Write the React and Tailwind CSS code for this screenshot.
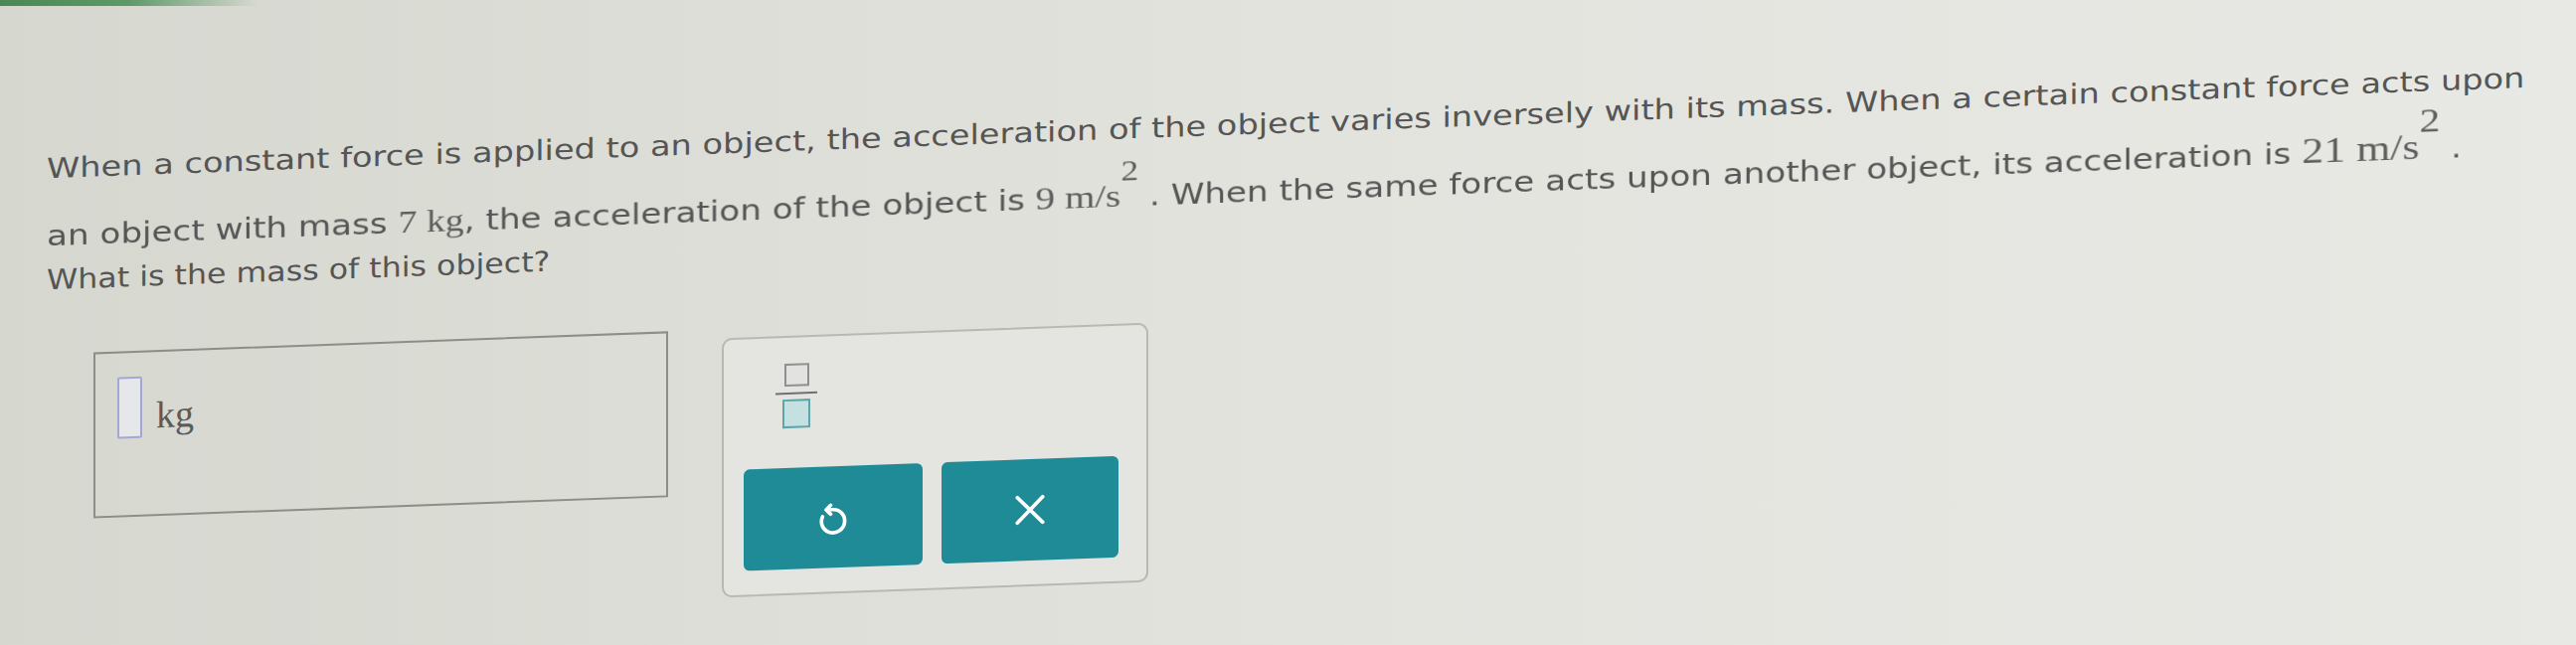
import React from 'react';

const serif = "font-['Liberation_Serif','Times_New_Roman',serif]";

function UndoIcon() {
  return (
    <svg width="40" height="40" viewBox="0 0 24 24" fill="none" stroke="white" strokeWidth="2.2" strokeLinecap="round" strokeLinejoin="round">
      <path d="M8.5 7.5 H12 A7 7 0 1 1 5.6 11.6" />
      <path d="M10.5 4.8 L7.8 7.5 L10.5 10.2" />
    </svg>
  );
}

function XIcon() {
  return (
    <svg width="34" height="34" viewBox="0 0 24 24" fill="none" stroke="white" strokeWidth="2.6" strokeLinecap="round">
      <path d="M3 3 L21 21 M21 3 L3 21" />
    </svg>
  );
}

export default function App() {
  return (
    <div className="w-[2591px] h-[649px] overflow-hidden bg-linear-to-r from-[#d6d7cf] via-[#e2e3dd] to-[#e8e9e4] font-['DejaVu_Sans',sans-serif] text-[#555555]">
      {/* top progress strip */}
      <div className="h-[6px] w-[260px] bg-linear-to-r from-[#4c8756] via-[#5e9a68] to-transparent" />

      <div className="origin-top-left skew-y-[-2.1deg] pt-[144px]">
        {/* question text */}
        <div className="pl-[47px] text-[28px]">
          <div className="origin-left scale-x-[1.2] h-[44px] leading-[44px] whitespace-nowrap">
            When a constant force is applied to an object, the acceleration of the object varies inversely with its mass. When a certain constant force acts upon
          </div>
          <div className="origin-left scale-x-[1.22] mt-[24px] h-[44px] leading-[44px] whitespace-nowrap">
            an object with mass <span className={`${serif} text-[31px] leading-none text-[#5e5e5e]`}>7 kg</span>, the acceleration of the object is{' '}
            <span className={`${serif} leading-none text-[32px] text-[#5e5e5e]`}>
              9 m/s
              <span className="relative -top-[26px] inline-block text-[29px] leading-none">2</span>
            </span>{' '}
            . When the same force acts upon another object, its acceleration is{' '}
            <span className={`${serif} leading-none text-[36px] text-[#5e5e5e]`}>
              21 m/s
              <span className="relative -top-[27px] inline-block text-[34px] leading-none">2</span>
            </span>{' '}
            .
          </div>
          <div className="origin-left scale-x-[1.13] h-[44px] leading-[44px] whitespace-nowrap">What is the mass of this object?</div>
        </div>

        {/* answer area */}
        <div className="mt-[52px] pl-[94px] flex items-start gap-[54px]">
          <div className="w-[578px] h-[167px] border-2 border-[#8e8e89] pl-[22px] pt-[24px] flex items-start">
            <div className="w-[25px] h-[62px] border-2 border-[#a4a7d4] rounded-[2px] bg-[#e6e7ea]" />
            <span className={`${serif} ml-[14px] mt-[20px] text-[38px] leading-none text-[#5a5a5a]`}>kg</span>
          </div>

          <div className="mt-[9px] w-[429px] h-[261px] border-2 border-[#b8b9b3] rounded-[10px] bg-[#e4e5e0] pl-[20px] pt-[26px]">
            <div className="ml-[32px] w-[42px] flex flex-col items-center">
              <div className="w-[25px] h-[23px] border-2 border-[#8f9090] bg-[#e2e3e0]" />
              <div className="mt-[6px] w-[42px] h-[2px] bg-[#6f7070]" />
              <div className="mt-[5px] w-[28px] h-[29px] border-2 border-[#5ea4aa] bg-[#c4e0e1]" />
            </div>
            <div className="mt-[40px] flex gap-[19px]">
              <button className="w-[180px] h-[102px] rounded-[6px] bg-[#1f8b97] flex items-center justify-center">
                <UndoIcon />
              </button>
              <button className="w-[178px] h-[102px] rounded-[6px] bg-[#1f8b97] flex items-center justify-center">
                <XIcon />
              </button>
            </div>
          </div>
        </div>
      </div>
    </div>
  );
}
